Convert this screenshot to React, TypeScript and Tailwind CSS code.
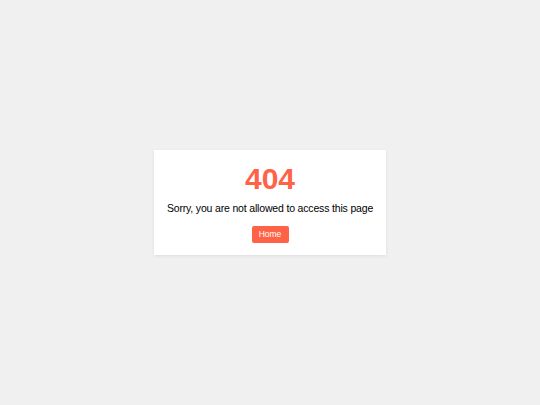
export default function App() {
  return (
    <div className="w-[540px] h-[405px] bg-[#f0f0f0] flex items-center justify-center" style={{ fontFamily: '"Liberation Sans", Arial, sans-serif' }}>
      <div className="w-[232px] h-[105px] bg-white shadow-[0_1px_3px_rgba(0,0,0,0.08)] flex flex-col items-center pt-[14px]">
        <div className="text-[30px] font-bold leading-[30px] text-[#ff6347]">404</div>
        <div className="text-[10.5px] leading-[13px] tracking-[-0.17px] text-black mt-[8px] whitespace-nowrap">Sorry, you are not allowed to access this page</div>
        <button className="mt-[11px] w-[37px] h-[17px] rounded-[2px] bg-[#ff6347] text-white text-[8.5px] leading-[17px]">Home</button>
      </div>
    </div>
  );
}
